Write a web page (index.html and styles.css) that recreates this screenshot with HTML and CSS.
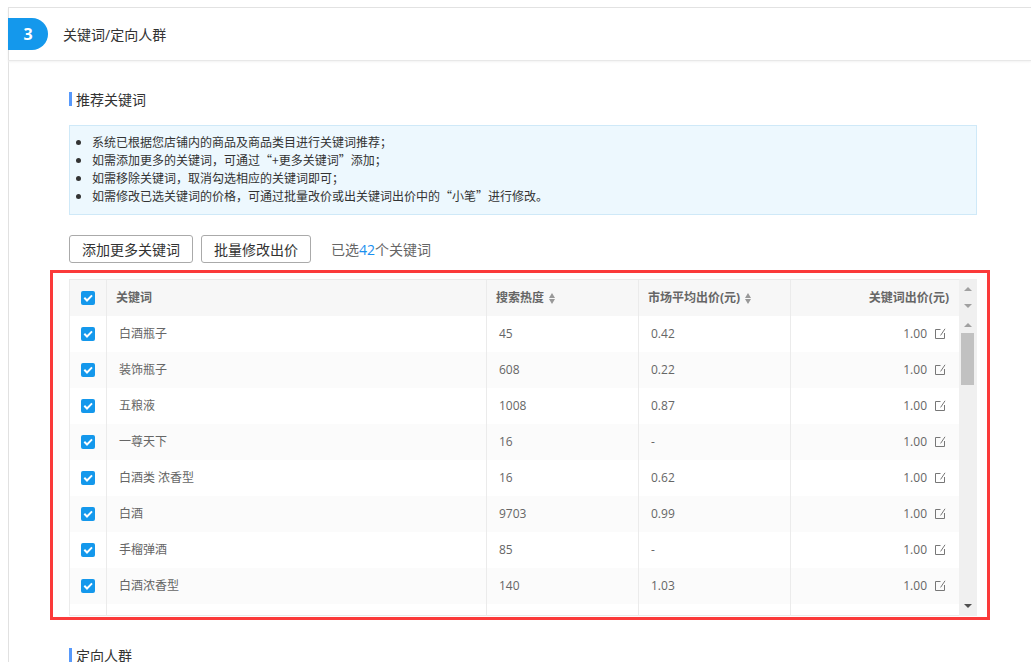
FILE: index.html
```html
<!DOCTYPE html>
<html lang="zh-CN">
<head>
<meta charset="utf-8">
<title>关键词/定向人群</title>
<link rel="stylesheet" href="styles.css">
</head>
<body>
<svg class="defs" aria-hidden="true">
  <symbol id="edit" viewBox="0 0 12 12"><path d="M6.5 1.5h-5v9h9V5M11 .8 6.6 7.4" fill="none" stroke="currentColor"/></symbol>
  <symbol id="sort" viewBox="0 0 6 11"><path d="M3 0 6 5H0zM0 6h6l-3 5z" fill="currentColor"/></symbol>
</svg>
<main class="panel">
  <header class="panel-head">
    <span class="step">3</span>
    <h1 class="panel-title">关键词/定向人群</h1>
  </header>
  <section class="content">
    <h2 class="section-title">推荐关键词</h2>
    <ul class="tips">
      <li>系统已根据您店铺内的商品及商品类目进行关键词推荐；</li>
      <li>如需添加更多的关键词，可通过“+更多关键词”添加；</li>
      <li>如需移除关键词，取消勾选相应的关键词即可；</li>
      <li>如需修改已选关键词的价格，可通过批量改价或出关键词出价中的“小笔”进行修改。</li>
    </ul>
    <div class="toolbar">
      <button class="btn" type="button">添加更多关键词</button>
      <button class="btn" type="button">批量修改出价</button>
      <p class="summary">已选<span class="count">42</span>个关键词</p>
    </div>
    <div class="highlight">
      <div class="table-box">
        <div class="table-view">
          <table class="keywords">
            <colgroup><col class="c-check"><col><col class="c-num"><col class="c-num"><col class="c-price"></colgroup>
            <thead>
              <tr>
                <th class="check"><input type="checkbox" checked aria-label="全选"></th>
                <th>关键词</th>
                <th>搜索热度<svg class="sort"><use href="#sort"/></svg></th>
                <th>市场平均出价(元)<svg class="sort"><use href="#sort"/></svg></th>
                <th class="price">关键词出价(元)</th>
              </tr>
            </thead>
            <tbody>
              <tr><td class="check"><input type="checkbox" checked aria-label="白酒瓶子"></td><td>白酒瓶子</td><td>45</td><td>0.42</td><td class="price">1.00<button class="edit" type="button" aria-label="修改出价"><svg><use href="#edit"/></svg></button></td></tr>
              <tr><td class="check"><input type="checkbox" checked aria-label="装饰瓶子"></td><td>装饰瓶子</td><td>608</td><td>0.22</td><td class="price">1.00<button class="edit" type="button" aria-label="修改出价"><svg><use href="#edit"/></svg></button></td></tr>
              <tr><td class="check"><input type="checkbox" checked aria-label="五粮液"></td><td>五粮液</td><td>1008</td><td>0.87</td><td class="price">1.00<button class="edit" type="button" aria-label="修改出价"><svg><use href="#edit"/></svg></button></td></tr>
              <tr><td class="check"><input type="checkbox" checked aria-label="一尊天下"></td><td>一尊天下</td><td>16</td><td>-</td><td class="price">1.00<button class="edit" type="button" aria-label="修改出价"><svg><use href="#edit"/></svg></button></td></tr>
              <tr><td class="check"><input type="checkbox" checked aria-label="白酒类 浓香型"></td><td>白酒类 浓香型</td><td>16</td><td>0.62</td><td class="price">1.00<button class="edit" type="button" aria-label="修改出价"><svg><use href="#edit"/></svg></button></td></tr>
              <tr><td class="check"><input type="checkbox" checked aria-label="白酒"></td><td>白酒</td><td>9703</td><td>0.99</td><td class="price">1.00<button class="edit" type="button" aria-label="修改出价"><svg><use href="#edit"/></svg></button></td></tr>
              <tr><td class="check"><input type="checkbox" checked aria-label="手榴弹酒"></td><td>手榴弹酒</td><td>85</td><td>-</td><td class="price">1.00<button class="edit" type="button" aria-label="修改出价"><svg><use href="#edit"/></svg></button></td></tr>
              <tr><td class="check"><input type="checkbox" checked aria-label="白酒浓香型"></td><td>白酒浓香型</td><td>140</td><td>1.03</td><td class="price">1.00<button class="edit" type="button" aria-label="修改出价"><svg><use href="#edit"/></svg></button></td></tr>
              <tr class="next"><td></td><td></td><td></td><td></td><td></td></tr>
            </tbody>
          </table>
        </div>
        <div class="scroll" aria-hidden="true">
          <div class="scroll-head"><i class="up"></i><i class="down"></i></div>
          <div class="scroll-body"><i class="up"></i><span class="thumb"></span><i class="down active"></i></div>
        </div>
      </div>
    </div>
    <h2 class="section-title">定向人群</h2>
  </section>
</main>
</body>
</html>
```
FILE: styles.css
```css
* { box-sizing: border-box; }
body {
  margin: 0;
  padding: 7px 0 0 8px;
  height: 100vh;
  overflow: hidden;
  background: #fff;
  color: #333;
  font: 12px/18px "Open Sans", "Noto Sans CJK SC", sans-serif;
}
h1, h2, p, ul { margin: 0; font-weight: 400; }
.defs { display: none; }
.panel {
  min-height: 100%;
  border-top: 1px solid #e1e1e1;
  border-left: 1px solid #e1e1e1;
}
.panel-head {
  display: flex;
  align-items: center;
  gap: 15px;
  height: 53px;
  margin-left: -1px;
  border-bottom: 1px solid #e8e8e8;
  box-shadow: 0 1px 2px #f2f2f2;
}
.step {
  width: 40px;
  border-radius: 0 16px 16px 0;
  background: #1498ec;
  color: #fff;
  font-size: 16px;
  font-weight: 700;
  line-height: 32px;
  text-align: center;
}
.panel-title { padding-top: 2px; font-size: 14px; line-height: 20px; }
.content { padding: 29px 54px 0 60px; }
.section-title {
  display: flex;
  align-items: center;
  gap: 4px;
  font-size: 14px;
  line-height: 20px;
}
.section-title::before {
  content: "";
  width: 3px;
  height: 14px;
  margin-bottom: 2px;
  background: #5799fb;
}
.tips {
  margin-top: 15px;
  padding: 7px 22px 9px 22px;
  border: 1px solid #cfe9f8;
  background: #edf8fe;
  font-family: "Noto Sans CJK SC", sans-serif;
}
.toolbar {
  display: flex;
  align-items: center;
  gap: 8px;
  margin-top: 20px;
}
.btn {
  height: 28px;
  padding: 2px 12px 0;
  border: 1px solid #aaa;
  border-radius: 3px;
  background: #fff;
  color: #333;
  font: inherit;
  font-size: 14px;
}
.summary { margin-left: 12px; padding-top: 2px; color: #666; font-size: 14px; }
.count { color: #1b8fef; }
.highlight {
  margin: 7px -13px 26px -19px;
  padding: 6px 10px 1px 16px;
  border: 3px solid #fb3a3a;
}
.table-box { display: flex; }
.table-view {
  flex: 1;
  border: 1px solid #ebebeb;
  border-right: 0;
}
.keywords {
  width: 100%;
  table-layout: fixed;
  border-collapse: separate;
  border-spacing: 0;
  color: #666;
}
.c-check { width: 37px; }
.c-num { width: 152px; }
.c-price { width: 168px; }
.keywords th, .keywords td {
  height: 36px;
  padding: 0 12px;
  border-right: 1px solid #ebebeb;
  text-align: left;
}
.keywords th { padding: 0 9px; background: #f7f7f7; font-weight: 700; }
.keywords .check { padding: 0; text-align: center; }
.keywords th:last-child, .keywords td:last-child { border-right: 0; }
.keywords .price { text-align: right; }
.keywords th.price { padding-right: 10px; }
.keywords td.price { padding-right: 13px; }
.keywords tbody tr:nth-child(even) { background: #fbfbfb; }
.keywords .next td { height: 11px; }
.sort {
  width: 6px;
  height: 11px;
  margin-left: 5px;
  vertical-align: -2px;
  color: #999;
}
.check input {
  appearance: none;
  display: block;
  width: 14px;
  height: 14px;
  margin: 0 auto;
  border-radius: 2px;
  background: #1498ec url("data:image/svg+xml,%3Csvg xmlns='http://www.w3.org/2000/svg' viewBox='0 0 14 14'%3E%3Cpath d='M3.3 6.8 6 9.5 11 4.4' fill='none' stroke='white' stroke-width='2'/%3E%3C/svg%3E");
}
.edit {
  width: 12px;
  height: 12px;
  margin-left: 7px;
  padding: 0;
  border: 0;
  background: none;
  color: #777;
  vertical-align: -2px;
}
.edit svg { display: block; width: 12px; height: 12px; }
.scroll {
  display: flex;
  flex-direction: column;
  width: 18px;
  padding-top: 1px;
  background: #f0f0f0;
}
.scroll-head, .scroll-body {
  display: flex;
  flex-direction: column;
  align-items: center;
  padding: 7px 2px 8px 1px;
}
.scroll-head { height: 36px; justify-content: space-between; }
.scroll-body { flex: 1; }
.up, .down { border: 4px solid transparent; }
.up { border-top: 0; border-bottom-color: #a0a0a0; }
.down { border-bottom: 0; border-top-color: #a0a0a0; }
.active { margin-top: auto; border-top-color: #505050; }
.thumb { width: 13px; height: 52px; margin-top: 6px; background: #c1c1c1; }
```
